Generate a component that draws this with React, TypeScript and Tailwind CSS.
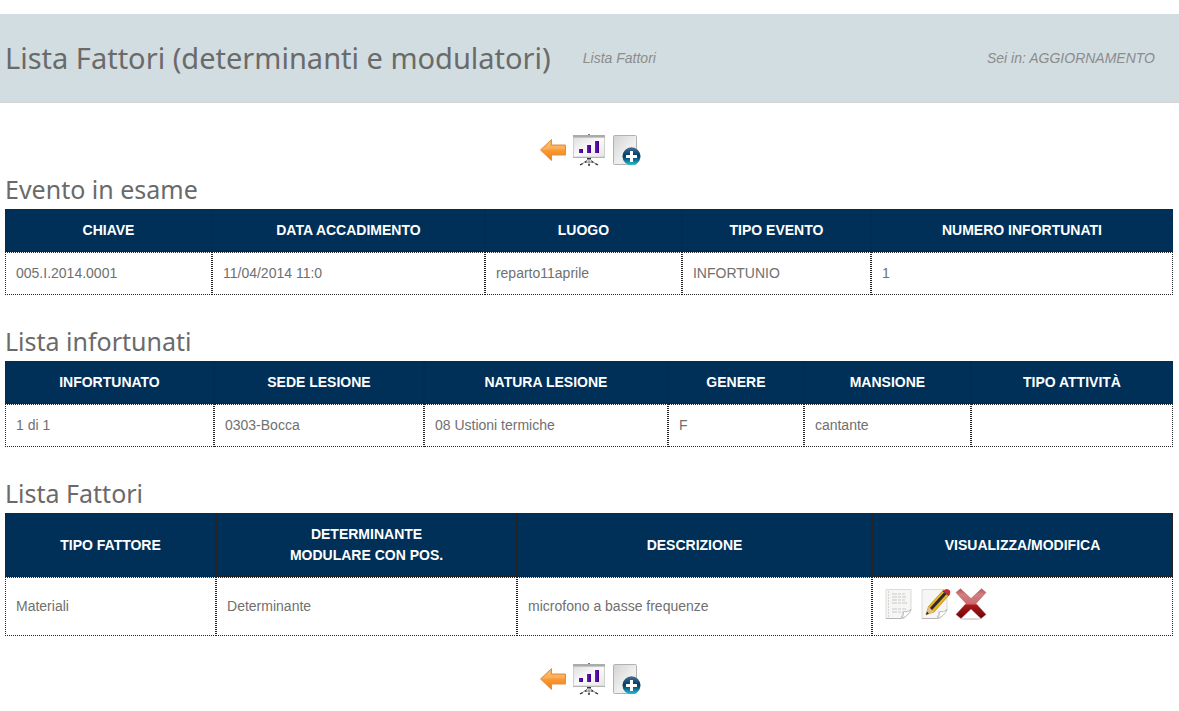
import type { ReactNode } from 'react';

interface Column {
  label: ReactNode;
  width: string;
}

interface DataTableProps {
  title: string;
  columns: Column[];
  row: ReactNode[];
}

const eventoColumns: Column[] = [
  { label: 'CHIAVE', width: 'w-[17.72%]' },
  { label: 'DATA ACCADIMENTO', width: 'w-[23.37%]' },
  { label: 'LUOGO', width: 'w-[16.87%]' },
  { label: 'TIPO EVENTO', width: 'w-[16.18%]' },
  { label: 'NUMERO INFORTUNATI', width: 'w-[25.86%]' },
];

const infortunatiColumns: Column[] = [
  { label: 'INFORTUNATO', width: 'w-[17.89%]' },
  { label: 'SEDE LESIONE', width: 'w-[17.98%]' },
  { label: 'NATURA LESIONE', width: 'w-[20.89%]' },
  { label: 'GENERE', width: 'w-[11.64%]' },
  { label: 'MANSIONE', width: 'w-[14.30%]' },
  { label: 'TIPO ATTIVITÀ', width: 'w-[17.30%]' },
];

const fattoriColumns: Column[] = [
  { label: 'TIPO FATTORE', width: 'w-[18.07%]' },
  { label: <>DETERMINANTE<br />MODULARE CON POS.</>, width: 'w-[25.77%]' },
  { label: 'DESCRIZIONE', width: 'w-[30.39%]' },
  { label: 'VISUALIZZA/MODIFICA', width: 'w-[25.77%]' },
];

function ArrowIcon({ id }: { id: string }) {
  return (
    <svg viewBox="0 0 32 32" className="size-8" aria-hidden="true">
      <defs>
        <linearGradient id={`${id}-arrow`} x1="0" y1="0" x2="0" y2="1">
          <stop offset="0" stopColor="#ffb765" />
          <stop offset="0.5" stopColor="#fb9a35" />
          <stop offset="1" stopColor="#f27d0c" />
        </linearGradient>
      </defs>
      <path d="M3.5 16 14.500 5.500V11H28.500V21H14.500V26.500Z" fill={`url(#${id}-arrow)`} stroke="#dd9048" strokeLinejoin="round" />
      <path d="M5 16 13.500 7.800V12H27.500V15.500Q14 15 5 16Z" fill="#ffd79c" opacity="0.3" />
    </svg>
  );
}

function PresentationIcon({ id }: { id: string }) {
  return (
    <svg viewBox="0 0 32 32" className="size-8" aria-hidden="true">
      <defs>
        <linearGradient id={`${id}-board`} x1="0" y1="0" x2="1" y2="1">
          <stop offset="0" stopColor="#dedede" />
          <stop offset="0.5" stopColor="#fafafa" />
          <stop offset="1" stopColor="#e4e4e4" />
        </linearGradient>
        <linearGradient id={`${id}-bars`} x1="0" y1="0" x2="1" y2="0">
          <stop offset="0" stopColor="#7a10d8" />
          <stop offset="1" stopColor="#36007e" />
        </linearGradient>
      </defs>
      <path d="M16 23.500V31M15.500 25 8.500 30.500M16.500 25l7 5.500M11.500 28h9" stroke="#8a8a8a" fill="none" />
      <path d="M7 31l2.500-1.400M22.500 29.600l2.500 1.400M15 31h2M14 24.500h4M12 28h1.500M18.500 28h1.500" stroke="#333" strokeWidth="1.300" fill="none" />
      <rect x="0.500" y="3" width="31" height="20" fill={`url(#${id}-board)`} stroke="#d0d0d0" />
      <rect x="0" y="1" width="32" height="2.500" fill="#a9acac" />
      <rect x="15" y="0" width="2" height="1" fill="#777" />
      <path d="M0 23.500h32" stroke="#b4b4b4" />
      <g fill={`url(#${id}-bars)`}>
        <rect x="6" y="15" width="4" height="4" />
        <rect x="14" y="11" width="4" height="8" />
        <rect x="22" y="7" width="4" height="12" />
      </g>
    </svg>
  );
}

function AddIcon({ id }: { id: string }) {
  return (
    <svg viewBox="0 0 32 32" className="size-8" aria-hidden="true">
      <defs>
        <linearGradient id={`${id}-page`} x1="0" y1="0" x2="1" y2="1">
          <stop offset="0" stopColor="#d2d2d2" />
          <stop offset="0.6" stopColor="#f1f1f1" />
          <stop offset="1" stopColor="#d8d8d8" />
        </linearGradient>
        <linearGradient id={`${id}-ball`} x1="0" y1="0" x2="0" y2="1">
          <stop offset="0" stopColor="#456f91" />
          <stop offset="0.45" stopColor="#073d66" />
          <stop offset="0.6" stopColor="#07537b" />
          <stop offset="1" stopColor="#25c4d7" />
        </linearGradient>
      </defs>
      <rect x="4.500" y="1.500" width="23" height="29" rx="1" fill={`url(#${id}-page)`} stroke="#b2b2b2" />
      <circle cx="22.500" cy="22.300" r="9" fill={`url(#${id}-ball)`} />
      <path d="M22.500 17v11M17 22.500h11" stroke="#fff" strokeWidth="3" />
    </svg>
  );
}

// Page with the folded corner, shared by "visualizza" and "modifica"
function PageShape() {
  return (
    <>
      <path d="M3 1.500H28V22L21 30.500H3Z" fill="#f6f6f5" stroke="#dadada" />
      <path d="M3 30.500H19" fill="none" stroke="#b5b5b5" />
      <path d="M18 30.500Q21 28 20.500 23.500Q24.500 25 28 21.500Q26 28 18 30.500Z" fill="#fff" stroke="#bdbdbd" />
      <path d="M18 29Q20 27 20 23" fill="none" stroke="#cfcfcf" />
    </>
  );
}

function ViewIcon() {
  return (
    <svg viewBox="0 0 32 32" className="size-8" aria-hidden="true">
      <PageShape />
      <path d="M5.500 3.500V29" stroke="#b0b0b0" strokeDasharray="1 2" />
      <path d="M9 6h13M9 9h14M9 12h13M9 15h15M9 21h14M9 24h9" stroke="#c8c8c8" strokeDasharray="5 1 3 1" />
    </svg>
  );
}

function EditIcon() {
  return (
    <svg viewBox="0 0 32 32" className="size-8" aria-hidden="true">
      <PageShape />
      <path d="M7 26.500 9.500 18.500 24.500 2 30.500 6.500 15 24Z" fill="#efb51d" stroke="#9c7411" strokeWidth="0.600" />
      <path d="M11.500 21.500 27 4.500" stroke="#2b2b2b" strokeWidth="3" />
      <path d="M7 27 9.500 18.500 15 24Z" fill="#e3bd85" />
      <path d="M7 27 8 23.800 10 25.500Z" fill="#222" />
      <path d="M23.500 3.500 25 2 31 6.500 29.500 8Z" fill="#555" />
      <path d="M25 2.500Q27 0 29.500 1.500T31 5.500L29.500 7Z" fill="#d9252b" />
    </svg>
  );
}

function DeleteIcon() {
  return (
    <svg viewBox="0 0 32 32" className="size-8" aria-hidden="true">
      <defs>
        <linearGradient id="delete-red" x1="0" y1="0" x2="0" y2="1">
          <stop offset="0" stopColor="#b9555a" />
          <stop offset="0.2" stopColor="#cf8083" />
          <stop offset="0.5" stopColor="#d0686b" />
          <stop offset="0.56" stopColor="#a81a1d" />
          <stop offset="1" stopColor="#6c0305" />
        </linearGradient>
      </defs>
      <ellipse cx="16" cy="31" rx="11" ry="1" fill="#d8d8d8" />
      <path d="M1 4.500 5.500 .8 16 10.500 26.500 .8 31 4.500 21 15.500 31 26.500 26 30.500 16 21 6 30.500 1 26.500 11 15.500Z" fill="url(#delete-red)" stroke="#a4585b" strokeWidth="0.500" />
    </svg>
  );
}

function Toolbar({ id }: { id: string }) {
  return (
    <nav className="flex justify-center gap-1" aria-label="Azioni">
      <a href="#indietro" aria-label="Indietro"><ArrowIcon id={id} /></a>
      <a href="#report" aria-label="Report"><PresentationIcon id={id} /></a>
      <a href="#aggiungi" aria-label="Aggiungi"><AddIcon id={id} /></a>
    </nav>
  );
}

function RowActions() {
  return (
    <div className="flex gap-1 pb-[5px]">
      <button type="button" aria-label="Visualizza"><ViewIcon /></button>
      <button type="button" aria-label="Modifica"><EditIcon /></button>
      <button type="button" aria-label="Elimina"><DeleteIcon /></button>
    </div>
  );
}

function DataTable({ title, columns, row }: DataTableProps) {
  return (
    <section>
      <h2 className="mb-[5px] font-['Noto_Sans',sans-serif] text-[25px] leading-[30px] text-[#6a6a6a]">{title}</h2>
      <table className="w-full table-fixed border-separate border-spacing-0">
        <thead>
          <tr>
            {columns.map((col, i) => (
              <th key={i} scope="col" className={`${col.width} border border-dotted border-[#222] bg-[#003058] p-2.5 text-center font-bold text-white`}>
                {col.label}
              </th>
            ))}
          </tr>
        </thead>
        <tbody>
          <tr>
            {row.map((cell, i) => (
              <td key={i} className="h-[43px] border border-dotted border-[#222] p-2.5">{cell}</td>
            ))}
          </tr>
        </tbody>
      </table>
    </section>
  );
}

export default function App() {
  return (
    <div className="bg-white pt-3.5 font-['Liberation_Sans',Arial,sans-serif] text-sm leading-[21px] text-[#707070]">
      <header className="flex items-center border-b border-[#d4d4d4] bg-[#d2dde1] py-[22px] pr-6 pl-[5px] text-[#8c8c8c] italic">
        <h1 className="mr-8 font-['Noto_Sans',sans-serif] text-[29px] leading-[44px] text-[#6a6a6a] not-italic">
          Lista Fattori (determinanti e modulatori)
        </h1>
        <p>Lista Fattori</p>
        <p className="ml-auto">Sei in: AGGIORNAMENTO</p>
      </header>
      <main className="pt-[31px] pr-1.5 pb-4 pl-[5px]">
        <Toolbar id="top" />
        <div className="mt-2 mb-[27px] flex flex-col gap-[31px]">
          <DataTable
            title="Evento in esame"
            columns={eventoColumns}
            row={['005.I.2014.0001', '11/04/2014 11:0', 'reparto11aprile', 'INFORTUNIO', '1']}
          />
          <DataTable
            title="Lista infortunati"
            columns={infortunatiColumns}
            row={['1 di 1', '0303-Bocca', '08 Ustioni termiche', 'F', 'cantante', '']}
          />
          <DataTable
            title="Lista Fattori"
            columns={fattoriColumns}
            row={['Materiali', 'Determinante', 'microfono a basse frequenze', <RowActions />]}
          />
        </div>
        <Toolbar id="bottom" />
      </main>
    </div>
  );
}
